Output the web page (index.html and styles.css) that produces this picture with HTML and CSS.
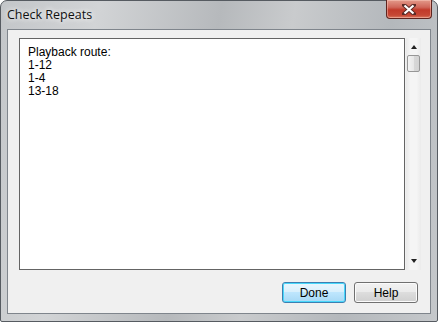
FILE: index.html
```html
<!DOCTYPE html>
<html lang="en">
  <head>
    <meta charset="UTF-8" />
    <title>Check Repeats</title>
    <link rel="stylesheet" href="styles.css">
  </head>
  <body>
    <div class="window">
      <div class="titlebar">
        <span class="title">Check Repeats</span>
        <button class="close" aria-label="Close">
          <svg width="14" height="11" viewBox="0 0 14 11">
            <path d="M2 1 L12 10 M12 1 L2 10" stroke="#5a2a26" stroke-width="4" stroke-linecap="square" />
            <path d="M2.5 1.5 L11.5 9.5 M11.5 1.5 L2.5 9.5" stroke="#fff" stroke-width="2.2" />
          </svg>
        </button>
      </div>
      <div class="client">
        <div class="content">
          <div class="textbox">
            <p>Playback route:</p>
            <p>1-12</p>
            <p>1-4</p>
            <p>13-18</p>
          </div>
          <div class="scrollbar">
            <span class="arrow up"></span>
            <span class="thumb"></span>
            <span class="spacer"></span>
            <span class="arrow down"></span>
          </div>
        </div>
        <div class="buttons">
          <button class="btn default">Done</button>
          <button class="btn">Help</button>
        </div>
      </div>
    </div>
  </body>
</html>
```

FILE: styles.css
```css
body {
  margin: 0;
  width: 438px;
  height: 322px;
  overflow: hidden;
  background: #ffffff;
  font-family: "Liberation Sans", Arial, sans-serif;
}
.window {
  box-sizing: border-box;
  width: 438px;
  height: 322px;
  border: 1px solid #565b61;
  border-radius: 7px 7px 2px 2px;
  background: linear-gradient(100deg, #c3c6c9 0%, #d2d4d6 20%, #b6b9bc 45%, #c9cbcd 60%, #b4b8bc 80%, #c5c8cb 100%);
  display: flex;
  flex-direction: column;
  padding: 0 6px 7px 6px;
}
.titlebar {
  height: 28px;
  display: flex;
  align-items: flex-start;
  justify-content: space-between;
}
.title {
  font-family: "Open Sans", "Noto Sans", sans-serif;
  font-size: 12.5px;
  color: #111;
  margin: 5px 0 0 0;
  text-shadow: 0 0 6px #f2f2f2, 0 0 4px #f2f2f2;
}
.close {
  width: 46px;
  height: 19px;
  margin: -1px -1px 0 0;
  padding: 0;
  border: 1px solid #5e241e;
  border-top: none;
  border-radius: 0 0 4px 4px;
  background: linear-gradient(#e39a8a 0%, #d0675a 40%, #c13a2a 55%, #c64835 85%, #d97a62 100%);
  box-shadow: inset 0 0 0 1px rgba(255, 210, 200, 0.45);
  display: flex;
  align-items: center;
  justify-content: center;
}
.client {
  flex: 1;
  background: #f0f0f0;
  border: 1px solid #7f858c;
  display: flex;
  flex-direction: column;
  padding: 8px 9px 10px 11px;
}
.content {
  display: flex;
  height: 232px;
}
.textbox {
  flex: 1;
  background: #ffffff;
  border: 1px solid #646464;
  padding: 7px 8px;
}
.textbox p {
  margin: 0;
  font-size: 12px;
  line-height: 13px;
  color: #000;
}
.scrollbar {
  width: 15px;
  margin-left: 1px;
  background: linear-gradient(90deg, #e9e9e9, #f5f5f5 30%, #f5f5f5 70%, #ebebeb);
  display: flex;
  flex-direction: column;
  align-items: center;
}
.arrow {
  width: 0;
  height: 0;
  border-left: 3px solid transparent;
  border-right: 3px solid transparent;
}
.arrow.up {
  margin-top: 7px;
  border-bottom: 4px solid #222;
}
.arrow.down {
  margin-bottom: 7px;
  border-top: 4px solid #222;
}
.thumb {
  box-sizing: border-box;
  width: 13px;
  height: 17px;
  margin-top: 6px;
  border: 1px solid #979797;
  border-radius: 2px;
  background: linear-gradient(90deg, #f3f3f3, #e8e8e8 50%, #d8d8d8 51%, #d3d3d3);
}
.spacer {
  flex: 1;
}
.buttons {
  display: flex;
  justify-content: flex-end;
  gap: 8px;
  margin-top: 12px;
  margin-right: 3px;
}
.btn {
  box-sizing: border-box;
  width: 64px;
  height: 21px;
  padding: 0;
  font-family: "Liberation Sans", Arial, sans-serif;
  font-size: 12px;
  color: #000;
  border: 1px solid #707070;
  border-radius: 3px;
  background: linear-gradient(#f2f2f2 0%, #ebebeb 45%, #dddddd 50%, #cfcfcf 100%);
  box-shadow: inset 0 0 0 1px #fbfbfb;
}
.btn.default {
  border-color: #3c7fb1;
  background: linear-gradient(#eaf6fd 0%, #d9f0fc 45%, #bee6fd 50%, #a7d9f5 100%);
  box-shadow: inset 0 0 0 1px #48d8fb;
}
```
